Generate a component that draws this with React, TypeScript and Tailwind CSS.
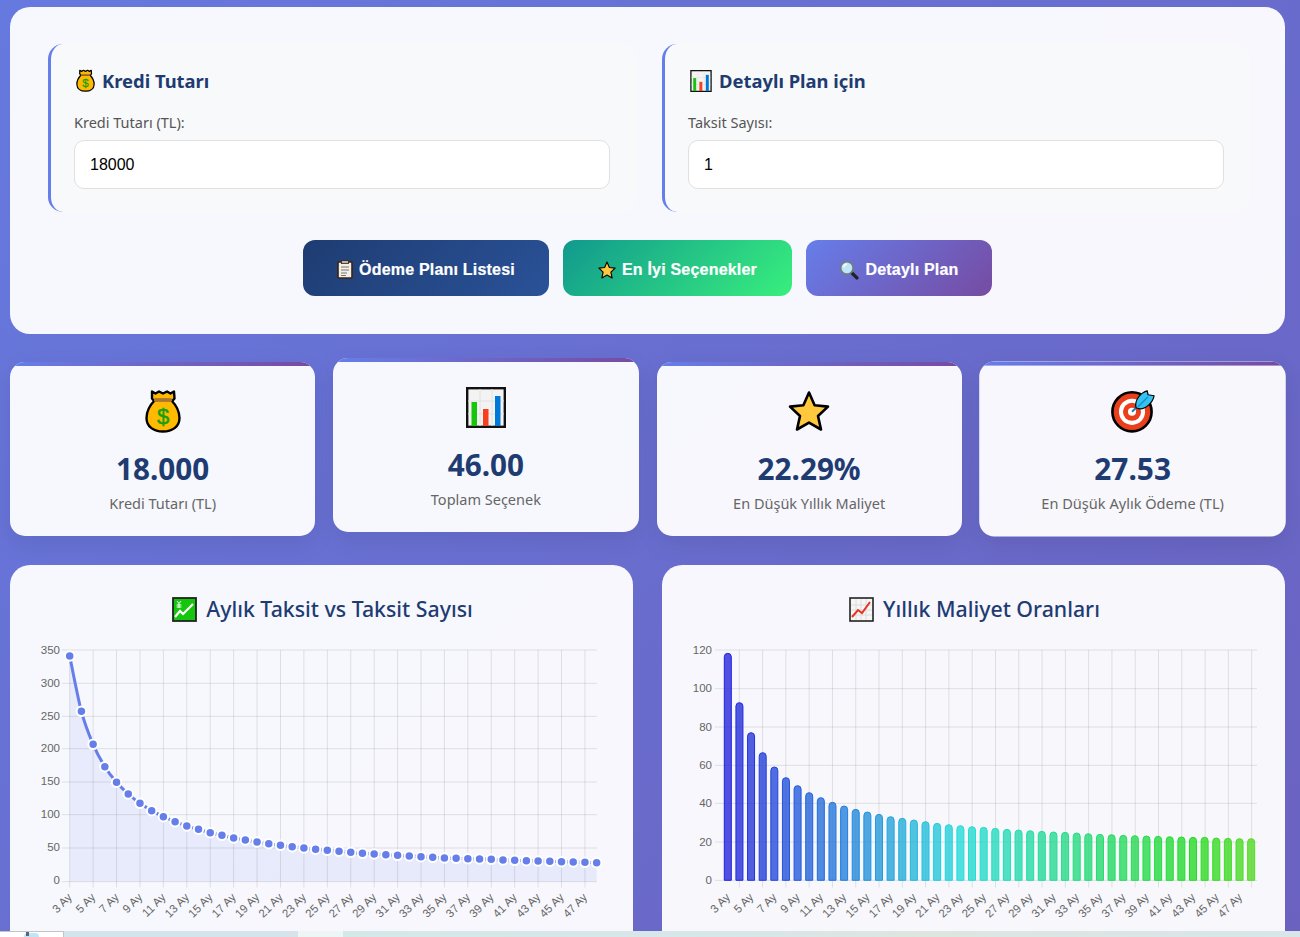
import type { ReactNode } from "react";

// ---- emoji drawings ----
function BagIcon({ w, h }: { w: number; h: number }) {
  return (
    <svg width={w} height={h} viewBox="0 0 36 44" className="shrink-0">
      <path d="M7 2.5 l3.5 2 3.5-2 4 2 4-2 3.5 2 3.5-2 .5 7 -3 3.5 H10 l-3-3.5z" fill="#ffb900" stroke="#000" strokeWidth="2.4" strokeLinejoin="round" />
      <path d="M10 11 C4 17 1.5 23 1.5 29 C1.5 38 9 42.5 18 42.5 C27 42.5 34.5 38 34.5 29 C34.5 23 32 17 26 11z" fill="#ffb900" stroke="#000" strokeWidth="2.4" strokeLinejoin="round" />
      <rect x="9" y="9.5" width="18" height="3" fill="#a9743a" />
      <text x="18" y="35" textAnchor="middle" fontSize="22" fontWeight="400" fill="#13a10e" stroke="#13a10e" strokeWidth="0.5" fontFamily="Liberation Sans, sans-serif">$</text>
    </svg>
  );
}

function ChartIcon({ w, h }: { w: number; h: number }) {
  return (
    <svg width={w} height={h} viewBox="0 0 40 41" className="shrink-0">
      <rect x="1.2" y="1.2" width="37.6" height="38.6" fill="#f3f3f3" stroke="#111" strokeWidth="2.4" />
      <path d="M2 14H38M2 27H38M14 2V39M26 2V39" stroke="#e2e2e2" strokeWidth="1" />
      <rect x="5.5" y="15" width="5.5" height="24" fill="#16c60c" />
      <rect x="17" y="22" width="5.5" height="17" fill="#f7401e" />
      <rect x="29" y="9" width="5.5" height="30" fill="#0078d7" />
    </svg>
  );
}

function StarIcon({ size }: { size: number }) {
  return (
    <svg width={size} height={size} viewBox="0 0 42 42" className="shrink-0">
      <path d="M21 2.5 L26.6 15.2 L40 16.6 L30 26 L33 39.5 L21 32.6 L9 39.5 L12 26 L2 16.6 L15.4 15.2z" fill="#ffc83d" stroke="#000" strokeWidth="2.6" strokeLinejoin="round" />
    </svg>
  );
}

function TargetIcon() {
  return (
    <svg width="44" height="44" viewBox="0 0 44 44" className="shrink-0">
      <circle cx="21" cy="23" r="19.5" fill="#ea3f1c" stroke="#000" strokeWidth="2.6" />
      <circle cx="21" cy="23" r="13" fill="#fff" />
      <circle cx="21" cy="23" r="9" fill="#ea3f1c" />
      <circle cx="21" cy="23" r="4" fill="#fff" />
      <path d="M21 23 L30 14" stroke="#1f7fbf" strokeWidth="2" />
      <path d="M25 19 C23 11 30 4 36 2 L37 6 L43 7 C42 13 35 21 28 20z" fill="#35c1f1" stroke="#000" strokeWidth="1.2" strokeLinejoin="round" />
      <path d="M27 18 L37 8" stroke="#0f8fd0" strokeWidth="1.2" />
    </svg>
  );
}

function ClipboardIcon() {
  return (
    <svg width="16" height="19" viewBox="0 0 16 19" className="shrink-0">
      <rect x="1" y="2" width="14" height="16" rx="1" fill="#f4efe6" stroke="#3a2414" strokeWidth="1.6" />
      <rect x="4.5" y="0.6" width="7" height="3" fill="#b5b5b5" stroke="#3a2414" strokeWidth="0.8" />
      <path d="M4 7H12M4 10H12M4 13H10M4 15.5H9" stroke="#777" strokeWidth="1" />
    </svg>
  );
}

function GlassIcon() {
  return (
    <svg width="20" height="20" viewBox="0 0 19 19" className="shrink-0">
      <path d="M11 11 L17 17" stroke="#222" strokeWidth="3.2" strokeLinecap="round" />
      <circle cx="7.5" cy="7.5" r="6" fill="#bfe6f7" stroke="#6f7d85" strokeWidth="1.8" />
      <path d="M4.5 7 C4.8 5 6 4 7.5 3.8" stroke="#fff" strokeWidth="1.2" fill="none" />
    </svg>
  );
}

function ExchangeIcon() {
  return (
    <svg width="25" height="25" viewBox="0 0 25 25" className="shrink-0">
      <rect x="1" y="1" width="23" height="23" fill="#16c60c" stroke="#222" strokeWidth="1.8" />
      <path d="M3 20 L8 14 L11 17 L21 7" stroke="#fff" strokeWidth="2.2" fill="none" />
      <path d="M5 4 L7 6.5 L9 4 M7 6.5V11 M4.6 8H9.4 M4.6 10H9.4" stroke="#fff" strokeWidth="1" fill="none" />
    </svg>
  );
}

function TrendIcon() {
  return (
    <svg width="25" height="25" viewBox="0 0 25 25" className="shrink-0">
      <rect x="1" y="1" width="23" height="23" fill="#f6f6f6" stroke="#222" strokeWidth="1.6" />
      <path d="M2 8H23M2 13H23M2 18H23M7 2V23M12 2V23M17 2V23" stroke="#d8d8d8" strokeWidth="0.8" />
      <path d="M3 20 L9 13 L13 16 L21 5" stroke="#e8321e" strokeWidth="2" fill="none" />
    </svg>
  );
}

// ---- chart data, pixel heights read off the picture ----
const lineTops = [
  78, 244, 343, 410, 457, 492, 520, 542, 560, 575, 588, 598, 608, 616, 624, 630, 636, 641, 646, 650, 654, 658, 661,
  664, 667, 670, 672, 674, 676, 678, 680, 682, 684, 685, 686, 687, 688, 690, 691, 692, 693, 694, 695, 696, 697, 698,
];
const barTops = [
  70, 218, 308, 368, 411, 443, 467, 488, 503, 517, 528, 538, 546, 553, 560, 565, 570, 575, 580, 584, 587, 590, 592, 595,
  598, 600, 602, 604, 606, 607, 609, 611, 613, 614, 616, 617, 618, 619, 620, 621, 622, 622, 624, 625, 626, 626,
];

function smoothPath(pts: [number, number][]) {
  let d = `M${pts[0][0]} ${pts[0][1]}`;
  for (let i = 0; i < pts.length - 1; i++) {
    const p0 = pts[Math.max(i - 1, 0)];
    const p1 = pts[i];
    const p2 = pts[i + 1];
    const p3 = pts[Math.min(i + 2, pts.length - 1)];
    d += ` C${p1[0] + (p2[0] - p0[0]) / 6} ${p1[1] + (p2[1] - p0[1]) / 6} ${p2[0] - (p3[0] - p1[0]) / 6} ${p2[1] - (p3[1] - p1[1]) / 6} ${p2[0]} ${p2[1]}`;
  }
  return d;
}

const gridColor = "rgba(0,0,0,0.1)";
const tickFont = "Liberation Sans, Arial, sans-serif";

function XLabels({ xs }: { xs: number[] }) {
  return (
    <>
      {xs.map((x, i) => (
        <text
          key={i}
          x={x + 3}
          y={258}
          textAnchor="end"
          fontSize="11.5"
          fill="#666"
          fontFamily={tickFont}
          transform={`rotate(-45 ${x + 3} 258)`}
        >
          {3 + i * 2} Ay
        </text>
      ))}
    </>
  );
}

function YLabels({ values, centers }: { values: number[]; centers: number[] }) {
  return (
    <>
      {values.map((v, i) => (
        <text key={v} x="50" y={centers[i] / 3 - 10 + 4} textAnchor="end" fontSize="11.5" fill="#666" fontFamily={tickFont}>
          {v}
        </text>
      ))}
    </>
  );
}

// svg origin sits at (10, 640) of the page
function LineChart() {
  const toX = (i: number) => 59.7 + i * 11.71;
  const toY = (t: number) => t / 3 - 10;
  const pts = lineTops.map((t, i) => [toX(i), toY(t)] as [number, number]);
  const line = smoothPath(pts);
  const hLines = [60, 160, 259, 356, 456, 554, 654, 755];
  const ticks = Array.from({ length: 23 }, (_, i) => 59.7 + i * 23.42);
  return (
    <svg width="623" height="291" className="block">
      <path d={`${line} L586.7 241.5 L59.7 241.5z`} fill="rgba(102,126,234,0.1)" />
      {hLines.map((z, i) => (
        <line key={i} x1="52" x2="587" y1={z / 3 - 10} y2={z / 3 - 10} stroke={gridColor} />
      ))}
      {ticks.map((x, i) => (
        <line key={i} x1={x} x2={x} y1="10" y2="247.5" stroke={gridColor} />
      ))}
      <path d={line} fill="none" stroke="#667eea" strokeWidth="3" />
      {pts.map((p, i) => (
        <circle key={i} cx={p[0]} cy={p[1]} r="4.75" fill="#667eea" stroke="#fff" strokeWidth="2" />
      ))}
      <YLabels values={[350, 300, 250, 200, 150, 100, 50, 0]} centers={[60, 158, 257, 355, 454, 553, 652, 750]} />
      <XLabels xs={ticks} />
    </svg>
  );
}

// svg origin sits at (662, 640) of the page
function BarChart() {
  const hLines = [60, 176, 291, 406, 520, 636, 751];
  const ticks = Array.from({ length: 23 }, (_, i) => 77.3 + i * 23.29);
  const labelXs = Array.from({ length: 23 }, (_, i) => 65.8 + i * 23.27);
  return (
    <svg width="623" height="291" className="block">
      {hLines.map((z, i) => (
        <line key={i} x1="53" x2="595" y1={z / 3 - 10} y2={z / 3 - 10} stroke={gridColor} />
      ))}
      {ticks.map((x, i) => (
        <line key={i} x1={x} x2={x} y1="10" y2="247.5" stroke={gridColor} />
      ))}
      {barTops.map((t, i) => {
        const cx = 65.8 + i * 11.63;
        const top = t / 3 - 10;
        const hue = 240 - i * 3;
        const bottom = 240.3;
        return (
          <path
            key={i}
            d={`M${cx - 3.5} ${bottom} V${top + 3.5} A3.5 3.5 0 0 1 ${cx + 3.5} ${top + 3.5} V${bottom}z`}
            fill={`hsla(${hue},70%,50%,0.8)`}
            stroke={`hsl(${hue},75%,50%)`}
            strokeWidth="1"
          />
        );
      })}
      <YLabels values={[120, 100, 80, 60, 40, 20, 0]} centers={[60, 175, 290, 405, 520, 635, 750]} />
      <XLabels xs={labelXs} />
    </svg>
  );
}

// ---- page parts ----
function InputPanel({ icon, title, label, value }: { icon: ReactNode; title: string; label: string; value: string }) {
  return (
    <div className="h-[168px] rounded-[15px] border-l-[3px] border-[#667eea] bg-[#f8f9fa] pl-[23px] pr-[26px] pt-[23px]">
      <h3 className="flex h-[27px] items-center gap-[7px] pl-[2px] text-[18.4px] font-bold text-[#1e3c72]">
        {icon}
        {title}
      </h3>
      <label className="mt-[18px] block h-[20px] text-[14.5px] leading-[20px] text-[#555]">{label}</label>
      <input
        readOnly
        value={value}
        className="mt-[8px] block h-[49px] w-full rounded-[10px] border border-[#e0e0e0] bg-white px-[15px] font-['Liberation_Sans',sans-serif] text-[16px] text-black outline-none"
      />
    </div>
  );
}

function ActionButton({ icon, text, bg }: { icon: ReactNode; text: string; bg: string }) {
  return (
    <button className={`flex h-[56px] items-center justify-center gap-[6px] rounded-[12px] pt-[3px] font-['Liberation_Sans',sans-serif] text-[16px] font-bold tracking-[0.2px] text-white [-webkit-text-stroke:0.2px_white] ${bg}`}>
      {icon}
      {text}
    </button>
  );
}

function StatCard({ icon, value, label, extra }: { icon: ReactNode; value: string; label: string; extra?: string }) {
  return (
    <div className={`relative h-[174px] overflow-hidden rounded-[15px] bg-white/95 text-center shadow-[0_8px_24px_rgba(0,0,0,0.08)] ${extra ?? ""}`}>
      <div className="h-[4px] bg-[linear-gradient(90deg,#667eea,#764ba2)]" />
      <div className="flex h-[50px] items-center justify-center pt-[40px]">{icon}</div>
      <div className="mt-[33px] text-[29.7px] font-bold leading-[40px] text-[#1e3c72]">{value}</div>
      <div className="mt-[4px] text-[14.5px] leading-[20px] text-[#666]">{label}</div>
    </div>
  );
}

function ChartCard({ icon, title, children }: { icon: ReactNode; title: string; children: ReactNode }) {
  return (
    <div className="h-[400px] rounded-[20px] bg-white/95 pt-[28px]">
      <h3 className="flex h-[32px] items-center justify-center gap-[9px] pl-[2px] text-[21.3px] font-medium text-[#1e3c72]">
        {icon}
        {title}
      </h3>
      <div className="mt-[15px]">{children}</div>
    </div>
  );
}

export default function App() {
  return (
    <div className="flex h-[937px] w-[1300px] flex-col overflow-hidden bg-[linear-gradient(135deg,#6679de_0%,#6b62c0_100%)] font-['Noto_Sans',sans-serif]">
      <div className="min-h-0 flex-1 overflow-hidden pl-[10px] pr-[15px] pt-[7px]">
        <section className="h-[327px] rounded-[20px] bg-white/95 pl-[38px] pr-[35px] pt-[37px]">
          <div className="grid grid-cols-2 gap-[26px]">
            <InputPanel icon={<BagIcon w={19} h={23} />} title="Kredi Tutarı" label="Kredi Tutarı (TL):" value="18000" />
            <InputPanel icon={<ChartIcon w={22} h={22} />} title="Detaylı Plan için" label="Taksit Sayısı:" value="1" />
          </div>
          <div className="mt-[28px] flex justify-center gap-[14px] pr-[3px]">
            <ActionButton icon={<ClipboardIcon />} text="Ödeme Planı Listesi" bg="w-[246px] bg-[linear-gradient(135deg,#1e3c72,#2a5298)]" />
            <ActionButton icon={<StarIcon size={18} />} text="En İyi Seçenekler" bg="w-[229px] bg-[linear-gradient(135deg,#11998e,#38ef7d)]" />
            <ActionButton icon={<GlassIcon />} text="Detaylı Plan" bg="w-[186px] bg-[linear-gradient(135deg,#667eea,#764ba2)]" />
          </div>
        </section>

        <section className="mt-[28px] grid grid-cols-4 gap-[18px]">
          <StatCard icon={<BagIcon w={36} h={44} />} value="18.000" label="Kredi Tutarı (TL)" />
          <StatCard icon={<ChartIcon w={40} h={41} />} value="46.00" label="Toplam Seçenek" extra="-translate-y-[4px]" />
          <StatCard icon={<StarIcon size={42} />} value="22.29%" label="En Düşük Yıllık Maliyet" />
          <StatCard icon={<TargetIcon />} value="27.53" label="En Düşük Aylık Ödeme (TL)" extra="scale-[1.005]" />
        </section>

        <section className="mt-[29px] grid grid-cols-2 gap-[29px]">
          <ChartCard icon={<ExchangeIcon />} title="Aylık Taksit vs Taksit Sayısı">
            <LineChart />
          </ChartCard>
          <ChartCard icon={<TrendIcon />} title="Yıllık Maliyet Oranları">
            <BarChart />
          </ChartCard>
        </section>
      </div>

      {/* cut-off strip along the bottom edge */}
      <div className="flex h-[6px] shrink-0">
        <div className="relative w-[64px] border-r border-t border-[#c4c4c4] bg-white">
          <div className="absolute left-[24px] top-[1px] h-[4px] w-[15px] rounded-t-full bg-[#bfe6f7]" />
          <div className="absolute left-[26px] top-0 h-[4px] w-[3px] bg-[#5a6678]" />
        </div>
        <div className="w-[234px] bg-[#d5e3ea]" />
        <div className="w-[45px] bg-[#eef5f5]" />
        <div className="flex-1 bg-[linear-gradient(90deg,#d5e8e8,#d8e6ea_40%,#dde6e0_60%,#d8e6ea)]" />
      </div>
    </div>
  );
}
